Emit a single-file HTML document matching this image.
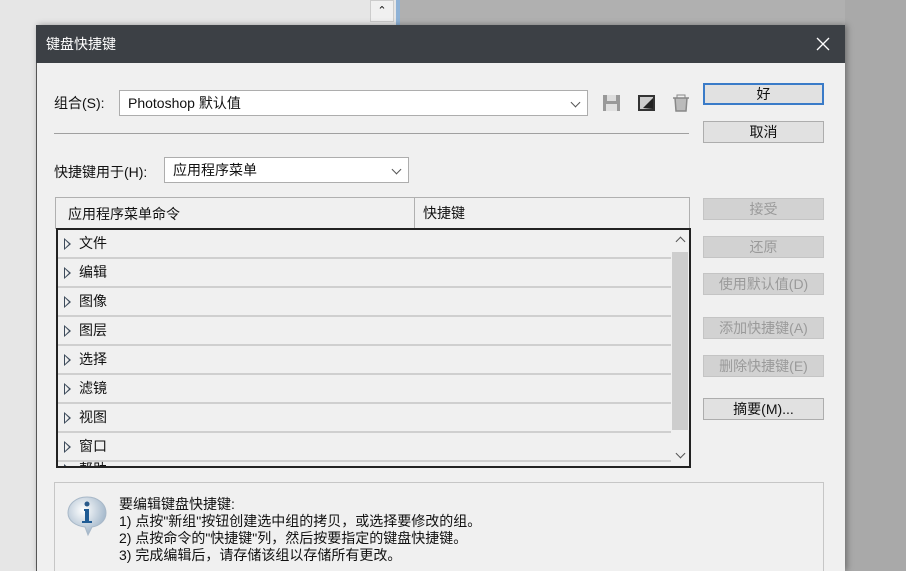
<!DOCTYPE html>
<html style="width:906px;height:571px;overflow:hidden"><head><meta charset="utf-8"><style>
*{margin:0;padding:0;box-sizing:border-box}
body{width:906px;height:571px;overflow:hidden;background:#e6e6e6;position:relative;font-family:"Liberation Sans","Noto Sans CJK SC",sans-serif;font-size:14px;color:#111}
.abs{position:absolute}
#rightbg{left:845px;top:0;width:61px;height:571px;background:#a9a9a9}
#topright{left:400px;top:0;width:506px;height:25px;background:#b0b0b0}
#dlg{left:36px;top:25px;width:809px;height:546px;background:#f0f0f0;border-left:1px solid #555;box-shadow:2px 0 6px rgba(0,0,0,.35)}
#title{left:36px;top:25px;width:809px;height:38px;background:#3c4045;color:#fff;font-size:14px;line-height:38px;padding-left:10px}
.sel{background:#fff;border:1px solid #adadad;height:26px;line-height:24px;padding-left:8px;font-size:14px}
.chev{position:absolute;right:8px;top:8px;width:7px;height:7px;border-right:1.3px solid #555;border-bottom:1.3px solid #555;transform:rotate(45deg)}
.btn{position:absolute;left:703px;width:121px;height:22px;background:#e1e1e1;border:1px solid #adadad;text-align:center;line-height:20px;font-size:14px}
.dis{background:#d2d2d2;color:#9a9a9a;border-color:#c4c4c4}
.row{position:absolute;left:0;width:613px;height:29px;border-bottom:2px solid #cfcfcf;line-height:27px;padding-left:21px;font-size:14px}
.tri{position:absolute;left:6px;top:8px;width:0;height:0;border-left:7px solid #3c4a5a;border-top:6px solid transparent;border-bottom:6px solid transparent}
.tri:after{content:"";position:absolute;left:-6px;top:-4px;border-left:4px solid #f0f0f0;border-top:4px solid transparent;border-bottom:4px solid transparent}
.info{font-size:14px;line-height:17px}
</style></head><body>
<div class="abs" id="topright"></div>
<div class="abs" style="left:370px;top:0;width:24px;height:22px;background:#f0f0f0;border:1px solid #ccc;text-align:center;font-size:11px;line-height:20px">&#8963;</div>
<div class="abs" style="left:396px;top:0;width:4px;height:25px;background:#8fb2d6"></div>
<div class="abs" id="rightbg"></div>
<div class="abs" id="dlg"></div>
<div class="abs" id="title">键盘快捷键</div>
<svg class="abs" style="left:815px;top:36px" width="16" height="16"><path d="M2 2 L14 14 M14 2 L2 14" stroke="#fff" stroke-width="1.3"/></svg>

<div class="abs" style="left:54px;top:93px">组合(S):</div>
<div class="abs sel" style="left:119px;top:90px;width:469px">Photoshop 默认值<div class="chev"></div></div>
<svg class="abs" style="left:601px;top:93px" width="95" height="20">
<rect x="2" y="2" width="17" height="16" fill="#999"/><rect x="6" y="2" width="9" height="6" fill="#ddd"/><rect x="5" y="11" width="11" height="7" fill="#e0e0e0"/>
<rect x="37" y="2" width="17" height="16" fill="#333"/><rect x="39" y="4" width="13" height="12" fill="#ccc"/><path d="M42 15 L52 5 L52 16 Z" fill="#222"/>
<path d="M72 5 H88 M74 5 L75 18 H85 L86 5" fill="#bbb" stroke="#888" stroke-width="1.5"/><rect x="76" y="2" width="8" height="3" fill="none" stroke="#888"/>
</svg>
<div class="abs" style="left:54px;top:133px;width:635px;height:1px;background:#a0a0a0"></div>

<div class="btn" style="top:83px;border:2px solid #3a7bc8;line-height:18px">好</div>
<div class="btn" style="top:121px">取消</div>

<div class="abs" style="left:54px;top:162px">快捷键用于(H):</div>
<div class="abs sel" style="left:164px;top:157px;width:245px">应用程序菜单<div class="chev"></div></div>

<div class="abs" style="left:55px;top:197px;width:635px;height:32px;background:#f0f0f0;border:1px solid #b0b0b0;line-height:32px;padding-left:12px">应用程序菜单命令</div>
<div class="abs" style="left:414px;top:198px;width:1px;height:30px;background:#b0b0b0"></div>
<div class="abs" style="left:423px;top:197px;line-height:32px">快捷键</div>

<div class="abs" style="left:56px;top:228px;width:635px;height:240px;border:2px solid #222;background:#f0f0f0;overflow:hidden">
<div class="row" style="top:0"><span class="tri"></span>文件</div>
<div class="row" style="top:29px"><span class="tri"></span>编辑</div>
<div class="row" style="top:58px"><span class="tri"></span>图像</div>
<div class="row" style="top:87px"><span class="tri"></span>图层</div>
<div class="row" style="top:116px"><span class="tri"></span>选择</div>
<div class="row" style="top:145px"><span class="tri"></span>滤镜</div>
<div class="row" style="top:174px"><span class="tri"></span>视图</div>
<div class="row" style="top:203px"><span class="tri"></span>窗口</div>
<div class="row" style="top:226px"><span class="tri"></span>帮助</div>
<div class="abs" style="left:613px;top:0;width:18px;height:236px;background:#f0f0f0"></div>
<div class="abs" style="left:614px;top:22px;width:16px;height:178px;background:#cdcdcd"></div>
<div class="abs" style="left:619px;top:8px;width:7px;height:7px;border-left:1.5px solid #555;border-top:1.5px solid #555;transform:rotate(45deg)"></div>
<div class="abs" style="left:619px;top:220px;width:7px;height:7px;border-right:1.5px solid #555;border-bottom:1.5px solid #555;transform:rotate(45deg)"></div>
</div>

<div class="btn dis" style="top:198px">接受</div>
<div class="btn dis" style="top:236px">还原</div>
<div class="btn dis" style="top:273px">使用默认值(D)</div>
<div class="btn dis" style="top:317px">添加快捷键(A)</div>
<div class="btn dis" style="top:355px">删除快捷键(E)</div>
<div class="btn" style="top:398px">摘要(M)...</div>

<div class="abs" style="left:54px;top:482px;width:770px;height:89px;border:1px solid #c6c6c6;border-bottom:none;background:#f0f0f0"></div>
<svg class="abs" style="left:66px;top:495px" width="42" height="42">
<defs><radialGradient id="g" cx="40%" cy="35%" r="65%"><stop offset="0" stop-color="#fff"/><stop offset="1" stop-color="#9fb4c8"/></radialGradient></defs>
<path d="M21 2 C32 2 40 9 40 18 C40 26 33 31 26 32 L22 40 L19 32 C10 31 2 26 2 18 C2 9 10 2 21 2 Z" fill="url(#g)" stroke="#a8b8c8"/>
<circle cx="21" cy="9" r="2.5" fill="#2a5a8a"/><path d="M18 14 H23 V26 H26 V28 H16 V26 H19 V16 H18 Z" fill="#1f5b94"/>
</svg>
<div class="abs info" style="left:119px;top:496px">要编辑键盘快捷键:<br>1) 点按"新组"按钮创建选中组的拷贝，或选择要修改的组。<br>2) 点按命令的"快捷键"列，然后按要指定的键盘快捷键。<br>3) 完成编辑后，请存储该组以存储所有更改。</div>
</body></html>
